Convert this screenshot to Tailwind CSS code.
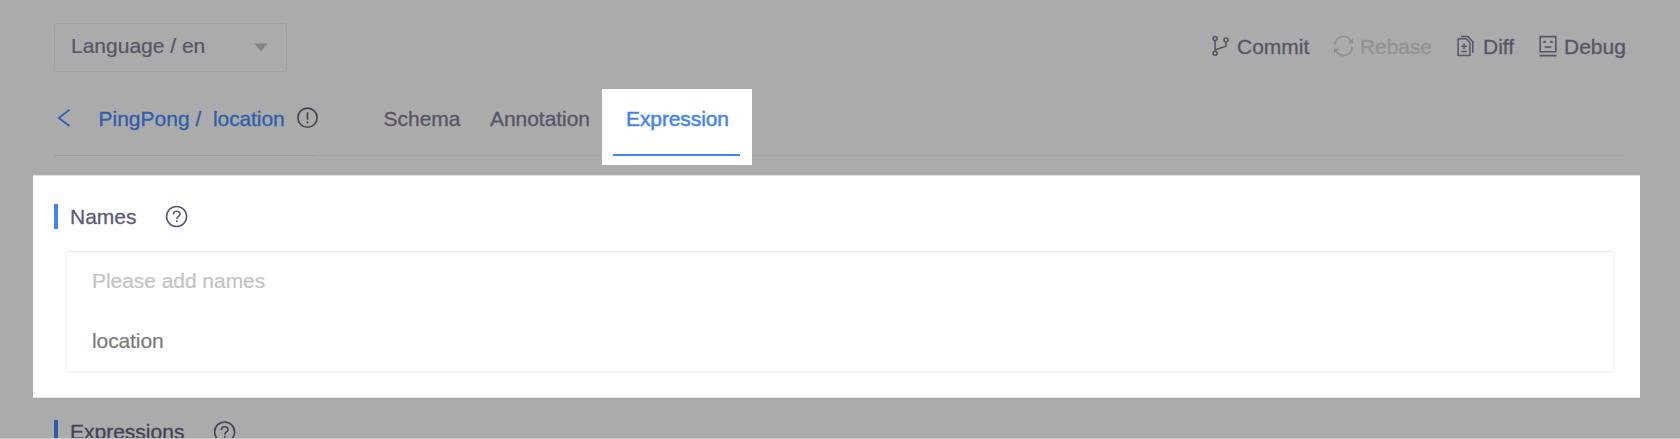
<!DOCTYPE html>
<html lang="en">
<head>
<meta charset="utf-8">
<title>PingPong / location</title>
<script src="https://cdn.jsdelivr.net/npm/@tailwindcss/browser@4"></script>
</head>
<body class="h-[439px] overflow-hidden bg-[#ababab] font-['Liberation_Sans',Arial,sans-serif] text-[21px] leading-6 text-[#585566]">
<div class="flex h-[439px] w-[1680px] flex-col overflow-hidden border-b border-[#c8c8c8] whitespace-nowrap">
  <header class="flex h-[89px] shrink-0 items-start pt-[23px] pl-[54px]">
    <div class="flex h-[49px] w-[233px] items-start rounded-[3px] border border-[#a0a0a8] pt-[10px] pl-4">
      <span class="w-[133px] [-webkit-text-stroke:0.2px]">Language / en</span>
      <svg class="mt-[9px] ml-[50px]" width="14" height="9" viewBox="0 0 14 9"><path d="M.5.5h13L7 8.5z" fill="#858585"/></svg>
    </div>
    <nav class="ml-[924px] flex pt-3 [-webkit-text-stroke:0.3px]">
      <a class="flex w-[123px]">
        <svg class="shrink-0" width="20" height="24" viewBox="0 0 20 24" fill="none" stroke="#585566" stroke-width="1.6"><circle cx="4.1" cy="3.6" r="2"/><circle cx="4.1" cy="18.3" r="2"/><circle cx="15" cy="5" r="2"/><path d="M4.1 5.5v11M15 7v4.2L4.4 14.8"/></svg>
        <span class="ml-[6px]">Commit</span>
      </a>
      <a class="flex w-[123px] text-[#939393]">
        <svg class="shrink-0" width="20" height="24" viewBox="0 0 20 24" fill="none" stroke="#919191" stroke-width="1.8"><path d="M.6 10.2A8.7 8.7 0 0 1 17.2 6.6M18.2 11.5A8.7 8.7 0 0 1 1.6 15.4"/><path d="M19 3.3v5.2h-5.2zM0 18.8v-5.4h5.2z" fill="#919191" stroke="none"/></svg>
        <span class="ml-[6px] tracking-[-0.1px]">Rebase</span>
      </a>
      <a class="flex w-[82px]">
        <svg class="shrink-0" width="18" height="24" viewBox="0 0 18 24" fill="none" stroke="#585566" stroke-width="1.5"><path d="M1.1 3.7h8.1l3.8 4v12.9H1.1zM4 1.6h6.8l5 5v11.2M4.3 11.2h5.5M7.05 8.4v5.5M4.3 16.4h5.5"/></svg>
        <span class="ml-[8px]">Diff</span>
      </a>
      <a class="flex">
        <svg class="shrink-0" width="18" height="24" viewBox="0 0 18 24" fill="none" stroke="#585566" stroke-width="1.6"><path d="M1.2 1.6h15.6v15.2H1.2zM.4 20.6h17.2M5.7 12h6.6"/><path d="M4.4 5.8h2.3v2.3H4.4zM11.3 5.8h2.3v2.3h-2.3z" fill="#585566" stroke="none"/></svg>
        <span class="ml-[7px]">Debug</span>
      </a>
    </nav>
  </header>

  <div class="flex h-[86px] shrink-0 items-start pl-[54px]">
    <div class="flex h-[67px] w-[264px] items-start border-b border-[#9d9d9d] pt-[18px] text-[#2f5eab] [-webkit-text-stroke:0.3px]">
      <svg class="mt-[1px] ml-[3px]" width="14" height="20" viewBox="0 0 14 20" fill="none" stroke="#2f62b4" stroke-width="1.8"><path d="M12.5 1.8 1.8 10l10.7 8"/></svg>
      <span class="ml-[27.5px] w-[114.5px]">PingPong /</span>
      <span class="w-[72px] tracking-[-0.1px]">location</span>
      <svg class="ml-[11px] shrink-0" width="22" height="22" viewBox="0 0 22 22" fill="none" stroke="#464153" stroke-width="1.6"><circle cx="11.5" cy="10.7" r="9.6"/><path d="M11.5 5.3v7.4M11.5 14.2v2"/></svg>
    </div>
    <nav class="flex w-[1308px] items-start">
      <div class="flex h-[67px] w-[284px] border-b border-[#a6a6a6] pt-[18px] [-webkit-text-stroke:0.3px]">
        <a class="ml-[65.5px] w-[106.5px]">Schema</a>
        <a class="tracking-[-0.05px]">Annotation</a>
      </div>
      <div class="flex h-[76px] w-[150px] flex-col bg-white pt-[18px] text-[#4384f2]">
        <a class="ml-6 tracking-[-0.1px] [-webkit-text-stroke:0.5px]">Expression</a>
        <div class="mt-[23px] ml-[11px] h-[2px] w-[127px] bg-[#4384f2]"></div>
      </div>
      <div class="h-[67px] flex-1 border-b border-[#a6a6a6]"></div>
    </nav>
  </div>

  <section class="ml-[33px] h-[223px] w-[1607px] shrink-0 border-y border-[#e0e0e0] bg-white pt-[28px] text-[#5e5a78]">
    <div class="ml-[21px] flex h-[25px]">
      <div class="w-1 bg-[#4384f2]"></div>
      <h2 class="mt-px ml-3 w-[95px] [-webkit-text-stroke:0.3px]">Names</h2>
      <svg class="mt-px" width="24" height="24" viewBox="0 0 24 24" fill="none" stroke="#5e5a78" stroke-width="1.6"><circle cx="11.6" cy="11.5" r="10"/><path d="M8.4 9.4c0-4.2 6.6-4.1 6.6-.2 0 2.3-3.2 2.2-3.2 4.8M11.8 15.3v1.9"/></svg>
    </div>
    <div class="mt-[22px] ml-[32px] h-[122px] w-[1550px] rounded-[3px] border-x-2 border-t border-b-2 border-[#f4f4fc] border-t-[#e9e9f4] pt-[17px] pl-[25px]">
      <p class="tracking-[-0.05px] text-[#c3c3c3] [-webkit-text-stroke:0.2px]">Please add names</p>
      <p class="mt-9 tracking-[-0.1px] text-[#7b7b7b] [-webkit-text-stroke:0.2px]">location</p>
    </div>
  </section>

  <section class="ml-[54px] flex h-[40px] shrink-0 pt-[22px] text-[#464153]">
    <div class="h-[25px] w-1 shrink-0 bg-[#2d5cac]"></div>
    <h2 class="ml-3 w-[143px] [-webkit-text-stroke:0.3px]">Expressions</h2>
    <svg class="shrink-0" width="24" height="24" viewBox="0 0 24 24" fill="none" stroke="#464153" stroke-width="1.6"><circle cx="11.6" cy="12" r="10"/><path d="M8.4 9.9c0-4.2 6.6-4.1 6.6-.2 0 2.3-3.2 2.2-3.2 4.8M11.8 15.8v1.9"/></svg>
  </section>
</div>
</body>
</html>
